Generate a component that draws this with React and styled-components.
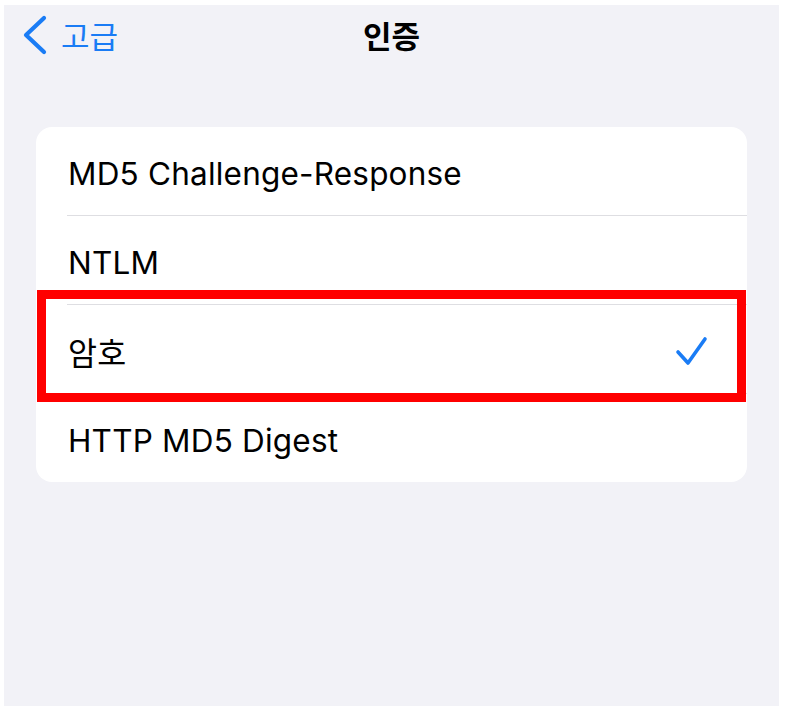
import React from 'react';
import styled, { createGlobalStyle } from 'styled-components';

const GlobalStyle = createGlobalStyle`
  html, body {
    margin: 0;
    padding: 0;
    background: #ffffff;
  }
  body {
    font-family: Inter, "Noto Sans CJK KR", sans-serif;
  }
`;

const options = [
  { label: 'MD5 Challenge-Response' },
  { label: 'NTLM' },
  { label: '암호', checked: true, highlighted: true },
  { label: 'HTTP MD5 Digest' },
];

const App = () => {
  return (
    <>
      <GlobalStyle />
      <Screen>
        <NavBar>
          <BackButton>
            <svg width="26" height="40" viewBox="0 0 26 40">
              <polyline
                points="22,3 4,20 22,37"
                fill="none"
                stroke="#1a7cf5"
                strokeWidth="4.2"
                strokeLinecap="round"
                strokeLinejoin="round"
              />
            </svg>
            <span>고급</span>
          </BackButton>
          <Title>인증</Title>
          <div />
        </NavBar>

        <Card>
          {options.map((opt, i) => (
            <React.Fragment key={opt.label}>
              {i > 0 && <Separator />}
              <Row>
                <Label>{opt.label}</Label>
                {opt.checked && (
                  <svg width="34" height="32" viewBox="0 0 34 32">
                    <polyline
                      points="3,17 13,28 30,4"
                      fill="none"
                      stroke="#1a7cf5"
                      strokeWidth="3.6"
                      strokeLinecap="round"
                      strokeLinejoin="round"
                    />
                  </svg>
                )}
                {opt.highlighted && <Highlight />}
              </Row>
            </React.Fragment>
          ))}
        </Card>
      </Screen>
    </>
  );
};

const Screen = styled.div`
  margin: 5px 0 0 4px;
  width: 775px;
  height: 701px;
  background: #f2f2f7;
  overflow: hidden;
`;

const NavBar = styled.header`
  height: 58px;
  display: grid;
  grid-template-columns: 1fr auto 1fr;
  align-items: center;
  padding: 0 18px 6px 18px;
`;

const BackButton = styled.div`
  display: flex;
  align-items: center;
  gap: 13px;
  color: #1a7cf5;
  font-family: "Noto Sans CJK KR", sans-serif;
  font-size: 31px;
  font-weight: 400;

  svg {
    margin-top: 2px;
  }
`;

const Title = styled.h1`
  margin: 0;
  font-family: "Noto Sans CJK KR", sans-serif;
  font-size: 31px;
  font-weight: 600;
  color: #000;
`;

const Card = styled.section`
  margin: 58px 32px 0 32px;
  background: #ffffff;
  border-radius: 16px;
  display: flex;
  flex-direction: column;
`;

const Row = styled.div`
  position: relative;
  height: 88px;
  display: flex;
  align-items: center;
  justify-content: space-between;
  padding: 4px 38px 0 32px;
  box-sizing: border-box;
`;

const Label = styled.span`
  font-family: Inter, "Noto Sans CJK KR", sans-serif;
  font-size: 31.5px;
  color: #000;
  letter-spacing: 0.2px;
`;

const Separator = styled.div`
  height: 1px;
  margin-left: 31px;
  background: #dedee2;
`;

const Highlight = styled.div`
  position: absolute;
  top: -15px;
  bottom: -9px;
  left: 1px;
  right: 1px;
  border: 9px solid #ff0000;
  pointer-events: none;
`;

export default App;
